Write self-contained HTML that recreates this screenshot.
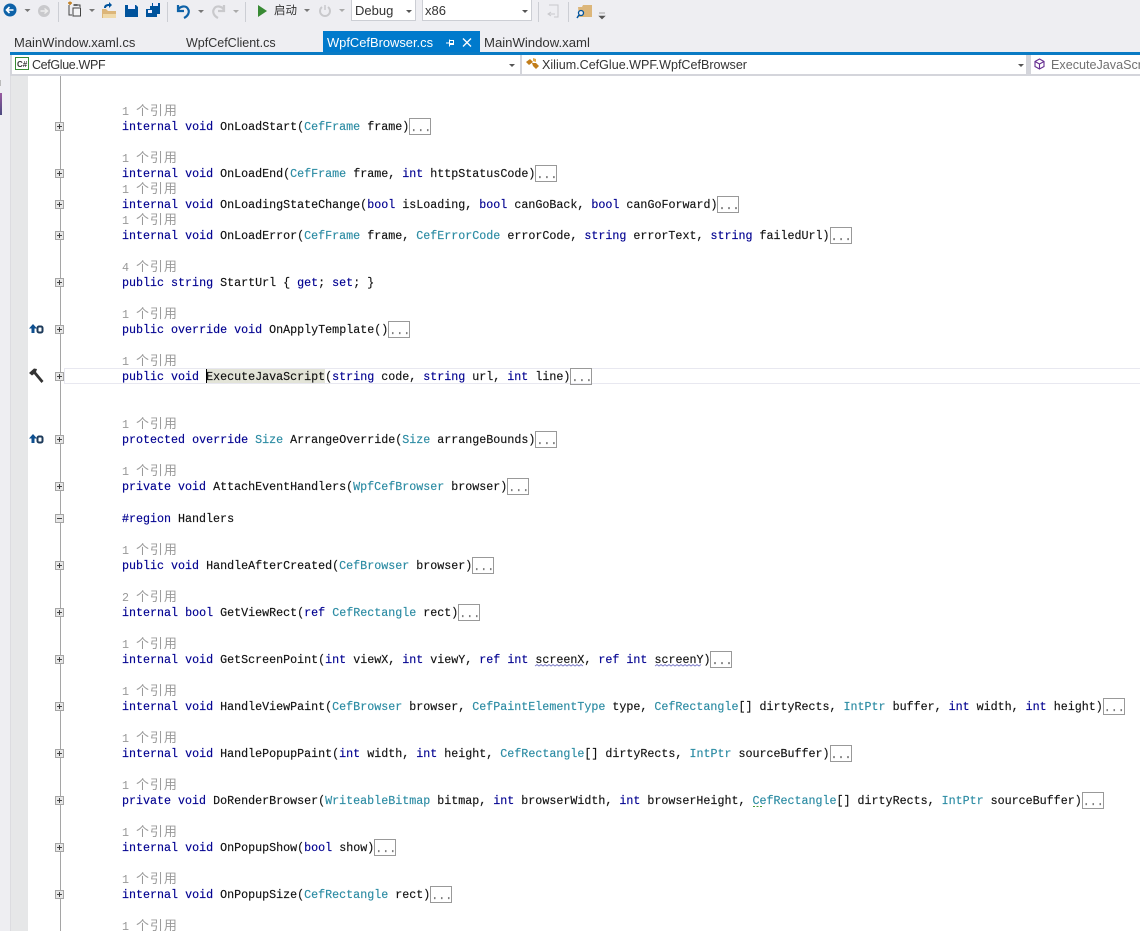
<!DOCTYPE html>
<html><head><meta charset="utf-8">
<style>
html,body{margin:0;padding:0;width:1140px;height:931px;overflow:hidden;background:#eeeef2;}
*{box-sizing:border-box}
.a{position:absolute}
#ui{position:relative;width:1140px;height:931px;overflow:hidden;font-family:"Liberation Sans","Noto Sans CJK SC",sans-serif;}
.t{position:absolute;font-size:12.9px;color:#333;white-space:pre;line-height:16px}
.l{position:absolute;left:122px;font-family:"Liberation Mono","Noto Sans CJK SC",monospace;font-size:11.68px;line-height:14px;height:14px;white-space:pre;color:#111;-webkit-text-stroke:.15px currentColor}
.r{position:absolute;left:122px;font-family:"Liberation Mono","Noto Sans CJK SC",monospace;font-size:11.68px;line-height:14px;height:14px;white-space:pre;color:#999;}
.r u{text-decoration:none;font-size:13px;letter-spacing:.9px}
b{font-weight:normal;color:#000090}
i{font-style:normal;color:#2b8ba3}
.e{display:inline-block;width:22px;height:17px;margin-left:0;border:1px solid #999;color:#777;line-height:18px;text-align:center;vertical-align:top;margin-top:-2px;overflow:hidden;-webkit-text-stroke:.2px #777}
.m{position:absolute;left:55px;width:9px;height:9px;border:1px solid #a5a5a5;background:#e8e8e8}
.m:before{content:"";position:absolute;left:1px;top:3px;width:5px;height:1px;background:#444}
.m.p:after{content:"";position:absolute;left:3px;top:1px;width:1px;height:5px;background:#444}
.d{position:absolute;width:0;height:0;border-left:3px solid transparent;border-right:3px solid transparent;border-top:3px solid #555}
</style></head>
<body><div id="ui">

<!-- toolbar icons -->
<svg class="a" style="left:0;top:0" width="620" height="26" viewBox="0 0 620 26">
<circle cx="10" cy="10" r="6.500" fill="#0e62a8"/><path d="M13.500 10H7M9.500 7L6.500 10L9.500 13" stroke="#fff" stroke-width="1.600" fill="none"/>
<path d="M24.500 9h6l-3 3z" fill="#777"/>
<circle cx="44" cy="11" r="6" fill="#c9c9cc"/><path d="M40.500 11H47M44.500 8.500L47.500 11L44.500 13.500" stroke="#eee" stroke-width="1.400" fill="none"/>
<path d="M58.500 2V22" stroke="#ccced4"/>
<path d="M69 5V15H72M76 5H80V7" stroke="#444" fill="none"/><rect x="73" y="8" width="7.500" height="8" fill="#f4f4f6" stroke="#444"/><path d="M68 3h4M70 1.500v3.500" stroke="#c27d1a" stroke-width="1.500"/><path d="M73.500 4h4v2h-4z" fill="#666"/>
<path d="M89 9h6l-3 3z" fill="#777"/>
<path d="M102 9h4l2 2h8v7h-14z" fill="#dcb67a"/><path d="M103 14h13v4h-13z" fill="#efd9a9"/><path d="M104 8c0-3 2-4 5-4V2l3 3-3 3V6c-2 0-3 1-3 2z" fill="#00539c"/>
<path d="M125 5h11l2 2v10h-13z" fill="#00539c"/><path d="M128 5h7v4h-7z" fill="#eef"/>
<path d="M146 9h4V6h2V3h8v11h-3v3h-11z" fill="#00539c"/><path d="M153 3h5v3h-5zM148 10h4v3h-4z" fill="#eef"/>
<path d="M167.500 2V22" stroke="#ccced4"/>
<path d="M178 5v6h6M178 10c2-4 8-5 10-1c2 3 0 7-4 9" stroke="#0e62a8" stroke-width="2.200" fill="none"/>
<path d="M198 10h6l-3 3z" fill="#777"/>
<path d="M224 5v6h-6M224 10c-2-4-8-5-10-1c-2 3 0 7 4 9" stroke="#c9c9cc" stroke-width="2.200" fill="none"/>
<path d="M233 10h6l-3 3z" fill="#aaa"/>
<path d="M245.500 2V22" stroke="#ccced4"/>
<path d="M258 5L267 11L258 17z" fill="#388a34"/>
<path d="M304 9h6l-3 3z" fill="#777"/>
<path d="M328 7a5 5 0 1 1-6 0" fill="none" stroke="#c9c9cc" stroke-width="2"/><path d="M325 5v5" stroke="#c9c9cc" stroke-width="1.500"/>
<path d="M339 9h6l-3 3z" fill="#aaa"/>
<path d="M538.500 2V22" stroke="#ccced4"/>
<path d="M549 5h9v12h-4" fill="none" stroke="#c8c8cc"/><path d="M548 14h7M551 12l-3 2 3 2" stroke="#c8c8cc" fill="none"/>
<path d="M568.500 2V22" stroke="#ccced4"/>
<path d="M578 7h4l1-2h9v12h-13z" fill="#dcb67a"/><circle cx="581" cy="13" r="2.500" fill="#eeeef2" stroke="#00539c" stroke-width="1.300"/><path d="M579 15l-2 3" stroke="#00539c" stroke-width="1.500"/>
<path d="M599 13h6M599 16h6l-3 3z" fill="#555" stroke="#555" stroke-width=".6"/>
</svg>
<div class="t" style="left:274px;top:3px;font-size:11.500px">启动</div>

<!-- combos -->
<div class="a" style="left:351px;top:0;width:65px;height:21px;background:#fff;border:1px solid #ccced4;border-top:0"></div>
<div class="t" style="left:355px;top:3px;font-size:13px">Debug</div>
<div class="d" style="left:406px;top:10px"></div>
<div class="a" style="left:422px;top:0;width:110px;height:21px;background:#fff;border:1px solid #ccced4;border-top:0"></div>
<div class="t" style="left:425px;top:3px;font-size:13px">x86</div>
<div class="d" style="left:522px;top:10px"></div>

<!-- tabs -->
<div class="t" style="left:14px;top:35px;font-size:13px">MainWindow.xaml.cs</div>
<div class="t" style="left:186px;top:35px;font-size:12.5px">WpfCefClient.cs</div>
<div class="a" style="left:323px;top:31px;width:157px;height:21px;background:#007acc"></div>
<div class="t" style="left:327px;top:35px;color:#fff">WpfCefBrowser.cs</div>
<svg class="a" style="left:444px;top:37px" width="32" height="12"><path d="M2 6h3M5.500 2.500v7M5.500 3.500h4v4h-4M5.500 6.500h4" stroke="#fff" fill="none"/><path d="M19 1.500l8 8M27 1.500l-8 8" stroke="#fff" stroke-width="1.300"/></svg>
<div class="t" style="left:484px;top:35px;font-size:13.15px">MainWindow.xaml</div>
<div class="a" style="left:10px;top:52px;width:1130px;height:3px;background:#0a7bc4"></div>

<!-- nav bar -->
<div class="a" style="left:10px;top:55px;width:1130px;height:21px;background:#d4d5db"></div>
<div class="a" style="left:12px;top:55px;width:508px;height:19px;background:#fff"></div>
<div class="a" style="left:522px;top:55px;width:504px;height:19px;background:#fff"></div>
<div class="a" style="left:1031px;top:55px;width:109px;height:19px;background:#fff"></div>
<svg class="a" style="left:15px;top:57px" width="14" height="14"><rect x=".5" y=".5" width="13" height="12" fill="#fff" stroke="#388a34"/><text x="2" y="10" font-family="Liberation Sans" font-size="8" font-weight="bold" fill="#333">C#</text></svg>
<div class="t" style="left:32px;top:57px;font-size:12.5px;letter-spacing:-.35px">CefGlue.WPF</div>
<div class="d" style="left:509px;top:64px"></div>
<svg class="a" style="left:525px;top:57px" width="15" height="14"><path d="M1 5l4-3 3 3-4 3z" fill="#c27d1a"/><path d="M7 6h4l3 3-3 3-3-3z" fill="#c27d1a"/><path d="M8 1l3 1v3l-3-1z" fill="#e0a848"/></svg>
<div class="t" style="left:542px;top:57px;font-size:12.55px">Xilium.CefGlue.WPF.WpfCefBrowser</div>
<div class="d" style="left:1018px;top:64px"></div>
<svg class="a" style="left:1034px;top:58px" width="12" height="12"><path d="M5.500 1l4.500 2.500v5L5.500 11 1 8.500v-5zM1 3.500l4.500 2.500 4.500-2.500M5.500 6v5" fill="none" stroke="#652d90" stroke-width="1.100"/></svg>
<div class="t" style="left:1051px;top:57px;color:#717171;font-size:12.6px">ExecuteJavaScri</div>

<!-- editor -->
<div class="a" style="left:10px;top:76px;width:18px;height:855px;background:#e6e7e8;border-left:1px solid #dcdce0"></div>
<div class="a" style="left:28px;top:76px;width:1112px;height:855px;background:#fff"></div>
<div class="a" style="left:60px;top:76px;width:1px;height:855px;background:#a5a5a5"></div>
<!-- left strip fragments -->
<div class="a" style="left:0;top:93px;width:2px;height:22px;background:linear-gradient(#9a5aa0,#4a4a80)"></div>
<div class="a" style="left:0;top:80px;width:1px;height:6px;background:#bbb"></div>

<!-- current line -->
<div class="a" style="left:64px;top:368px;width:1076px;height:16px;border:1px solid #e8e8f0;border-right:0;background:#fff"></div>
<div class="a" style="left:206px;top:369px;width:119px;height:14px;background:#e3e4d8"></div>
<div class="a" style="left:206px;top:369px;width:1px;height:14px;background:#000"></div>

<!-- margin glyphs -->
<svg class="a" style="left:28px;top:323px" width="16" height="12"><path d="M5 1L1 5.500H3.500V10H6.500V5.500H9z" fill="#0e4f8f"/><rect x="9.500" y="3.500" width="5" height="6" rx="1.500" fill="none" stroke="#1c3a5a" stroke-width="2"/></svg>
<svg class="a" style="left:28px;top:433px" width="16" height="12"><path d="M5 1L1 5.500H3.500V10H6.500V5.500H9z" fill="#0e4f8f"/><rect x="9.500" y="3.500" width="5" height="6" rx="1.500" fill="none" stroke="#1c3a5a" stroke-width="2"/></svg>
<svg class="a" style="left:28px;top:367px" width="17" height="17"><path d="M1 6L6 1.500L9 2L8 5L15.500 14L13.500 16L6 7L4 8.500z" fill="#333"/></svg>

<!-- outline boxes -->
<div class="m p" style="top:122px"></div><div class="m p" style="top:169px"></div><div class="m p" style="top:200px"></div><div class="m p" style="top:231px"></div><div class="m p" style="top:278px"></div><div class="m p" style="top:325px"></div><div class="m p" style="top:372px"></div><div class="m p" style="top:435px"></div><div class="m p" style="top:482px"></div><div class="m" style="top:514px"></div><div class="m p" style="top:561px"></div><div class="m p" style="top:608px"></div><div class="m p" style="top:655px"></div><div class="m p" style="top:702px"></div><div class="m p" style="top:749px"></div><div class="m p" style="top:796px"></div><div class="m p" style="top:843px"></div><div class="m p" style="top:890px"></div>

<!-- reference lens -->
<div class="r" style="top:105px">1 <u>个引用</u></div>
<div class="r" style="top:152px">1 <u>个引用</u></div>
<div class="r" style="top:183px">1 <u>个引用</u></div>
<div class="r" style="top:214px">1 <u>个引用</u></div>
<div class="r" style="top:261px">4 <u>个引用</u></div>
<div class="r" style="top:308px">1 <u>个引用</u></div>
<div class="r" style="top:355px">1 <u>个引用</u></div>
<div class="r" style="top:418px">1 <u>个引用</u></div>
<div class="r" style="top:465px">1 <u>个引用</u></div>
<div class="r" style="top:544px">1 <u>个引用</u></div>
<div class="r" style="top:591px">2 <u>个引用</u></div>
<div class="r" style="top:638px">1 <u>个引用</u></div>
<div class="r" style="top:685px">1 <u>个引用</u></div>
<div class="r" style="top:732px">1 <u>个引用</u></div>
<div class="r" style="top:779px">1 <u>个引用</u></div>
<div class="r" style="top:826px">1 <u>个引用</u></div>
<div class="r" style="top:873px">1 <u>个引用</u></div>
<div class="r" style="top:920px">1 <u>个引用</u></div>

<!-- code -->
<div class="l" style="top:120px"><b>internal</b> <b>void</b> OnLoadStart(<i>CefFrame</i> frame)<span class="e">...</span></div>
<div class="l" style="top:167px"><b>internal</b> <b>void</b> OnLoadEnd(<i>CefFrame</i> frame, <b>int</b> httpStatusCode)<span class="e">...</span></div>
<div class="l" style="top:198px"><b>internal</b> <b>void</b> OnLoadingStateChange(<b>bool</b> isLoading, <b>bool</b> canGoBack, <b>bool</b> canGoForward)<span class="e">...</span></div>
<div class="l" style="top:229px"><b>internal</b> <b>void</b> OnLoadError(<i>CefFrame</i> frame, <i>CefErrorCode</i> errorCode, <b>string</b> errorText, <b>string</b> failedUrl)<span class="e">...</span></div>
<div class="l" style="top:276px"><b>public</b> <b>string</b> StartUrl { <b>get</b>; <b>set</b>; }</div>
<div class="l" style="top:323px"><b>public</b> <b>override</b> <b>void</b> OnApplyTemplate()<span class="e">...</span></div>
<div class="l" style="top:370px"><b>public</b> <b>void</b> ExecuteJavaScript(<b>string</b> code, <b>string</b> url, <b>int</b> line)<span class="e">...</span></div>
<div class="l" style="top:433px"><b>protected</b> <b>override</b> <i>Size</i> ArrangeOverride(<i>Size</i> arrangeBounds)<span class="e">...</span></div>
<div class="l" style="top:480px"><b>private</b> <b>void</b> AttachEventHandlers(<i>WpfCefBrowser</i> browser)<span class="e">...</span></div>
<div class="l" style="top:512px"><b>#region</b> Handlers</div>
<div class="l" style="top:559px"><b>public</b> <b>void</b> HandleAfterCreated(<i>CefBrowser</i> browser)<span class="e">...</span></div>
<div class="l" style="top:606px"><b>internal</b> <b>bool</b> GetViewRect(<b>ref</b> <i>CefRectangle</i> rect)<span class="e">...</span></div>
<div class="l" style="top:653px"><b>internal</b> <b>void</b> GetScreenPoint(<b>int</b> viewX, <b>int</b> viewY, <b>ref</b> <b>int</b> screenX, <b>ref</b> <b>int</b> screenY)<span class="e">...</span></div>
<div class="l" style="top:700px"><b>internal</b> <b>void</b> HandleViewPaint(<i>CefBrowser</i> browser, <i>CefPaintElementType</i> type, <i>CefRectangle</i>[] dirtyRects, <i>IntPtr</i> buffer, <b>int</b> width, <b>int</b> height)<span class="e">...</span></div>
<div class="l" style="top:747px"><b>internal</b> <b>void</b> HandlePopupPaint(<b>int</b> width, <b>int</b> height, <i>CefRectangle</i>[] dirtyRects, <i>IntPtr</i> sourceBuffer)<span class="e">...</span></div>
<div class="l" style="top:794px"><b>private</b> <b>void</b> DoRenderBrowser(<i>WriteableBitmap</i> bitmap, <b>int</b> browserWidth, <b>int</b> browserHeight, <i>CefRectangle</i>[] dirtyRects, <i>IntPtr</i> sourceBuffer)<span class="e">...</span></div>
<div class="l" style="top:841px"><b>internal</b> <b>void</b> OnPopupShow(<b>bool</b> show)<span class="e">...</span></div>
<div class="l" style="top:888px"><b>internal</b> <b>void</b> OnPopupSize(<i>CefRectangle</i> rect)<span class="e">...</span></div>

<!-- squiggles -->
<svg class="a" style="left:0;top:0" width="1140" height="931">
<path d="M535 666l2-1.500 2 1.500 2-1.500 2 1.500 2-1.500 2 1.500 2-1.500 2 1.500 2-1.500 2 1.500 2-1.500 2 1.500 2-1.500 2 1.500 2-1.500 2 1.500 2-1.500 2 1.500 2-1.500 2 1.500 2-1.500 2 1.500 2-1.500 2 1.500" fill="none" stroke="#7a7ac8" stroke-width=".9"/>
<path d="M655 666l2-1.500 2 1.500 2-1.500 2 1.500 2-1.500 2 1.500 2-1.500 2 1.500 2-1.500 2 1.500 2-1.500 2 1.500 2-1.500 2 1.500 2-1.500 2 1.500 2-1.500 2 1.500 2-1.500 2 1.500 2-1.500 2 1.500 2-1.500" fill="none" stroke="#7a7ac8" stroke-width=".9"/>
<path d="M753 806.500h10" stroke="#4a9a3a" stroke-dasharray="2 1.500"/>
</svg>

</div></body></html>
